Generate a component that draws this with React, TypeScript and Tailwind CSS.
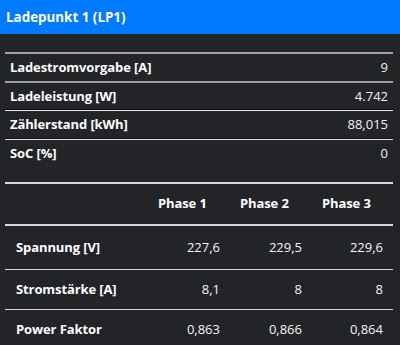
import React from 'react';

const summary = [
  { label: 'Ladestromvorgabe [A]', value: '9', line: 'border-t-2 border-[#9c9fa3]' },
  { label: 'Ladeleistung [W]', value: '4.742', line: 'border-t-2 border-[#9c9fa3]' },
  { label: 'Zählerstand [kWh]', value: '88,015', line: 'border-t border-[#e6e6e6] shadow-[0_-1px_0_#0b0c0d]' },
  { label: 'SoC [%]', value: '0', line: 'border-t border-[#e6e6e6] shadow-[0_-1px_0_#0b0c0d]' },
];

const phases = [
  { label: 'Spannung [V]', values: ['227,6', '229,5', '229,6'], h: 'h-[43px]' },
  { label: 'Stromstärke [A]', values: ['8,1', '8', '8'], h: 'h-[40px]' },
  { label: 'Power Faktor', values: ['0,863', '0,866', '0,864'], h: 'h-[41px]' },
];

export default function App() {
  return (
    <div className="w-[400px] h-[345px] overflow-hidden bg-[#222428] text-white font-['Open_Sans',sans-serif]">
      <div className="h-[34px] bg-[#007bff] px-[6px] flex items-center text-[13.4px] font-bold">
        Ladepunkt 1 (LP1)
      </div>

      <div className="pl-[5px] pr-[7px] pt-[18px]">
        <div className="flex flex-col text-[13px]">
          {summary.map((row) => (
            <div key={row.label} className={`h-[29px] flex items-center justify-between pl-[5px] pr-[5px] ${row.line}`}>
              <span className="font-bold tracking-[-0.1px]">{row.label}</span>
              <span className="text-[#f4f4f4]">{row.value}</span>
            </div>
          ))}
        </div>

        <div className="mt-[14px] flex flex-col text-[13px] border-t-2 border-[#d8d8d8]">
          <div className="h-[42px] grid grid-cols-[143px_82px_82px_1fr] items-center font-bold tracking-[-0.1px] border-b-2 border-[#d8d8d8]">
            <span />
            <span className="pl-[10px]">Phase 1</span>
            <span className="pl-[10px]">Phase 2</span>
            <span className="pl-[10px]">Phase 3</span>
          </div>
          {phases.map((row, i) => (
            <div
              key={row.label}
              className={`${row.h} grid grid-cols-[143px_82px_82px_1fr] items-center ${i > 0 ? 'border-t border-[#d8d8d8]' : ''}`}
            >
              <span className="pl-[11px] font-bold tracking-[-0.1px]">{row.label}</span>
              {row.values.map((v, j) => (
                <span key={j} className="text-right pr-[10px] text-[#f4f4f4]">{v}</span>
              ))}
            </div>
          ))}
        </div>
      </div>
    </div>
  );
}
